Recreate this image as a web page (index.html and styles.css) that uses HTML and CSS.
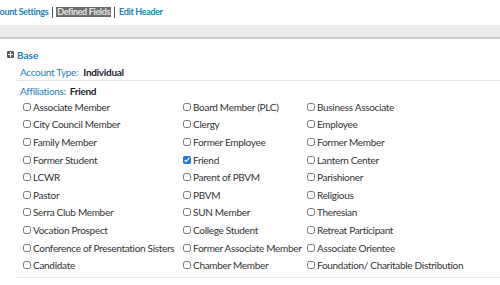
FILE: index.html
```html
<!DOCTYPE html>
<html>
<head>
<meta charset="utf-8">
<link rel="stylesheet" href="styles.css">
</head>
<body>
<nav class="tabs">
  <a class="tab">Account Settings</a>
  <span class="sep"></span>
  <a class="tab active">Defined Fields</a>
  <span class="sep"></span>
  <a class="tab">Edit Header</a>
</nav>
<div class="bar"></div>
<section class="panel">
  <div class="section-title"><span class="plus"></span>Base</div>
  <div class="field"><span class="label">Account Type:</span><span class="value">Individual</span></div>
  <div class="field divided"><span class="label">Affiliations:</span><span class="value">Friend</span></div>
  <div class="grid">
    <label class="opt"><input type="checkbox">Associate Member</label>
    <label class="opt"><input type="checkbox">Board Member (PLC)</label>
    <label class="opt"><input type="checkbox">Business Associate</label>
    <label class="opt"><input type="checkbox">City Council Member</label>
    <label class="opt"><input type="checkbox">Clergy</label>
    <label class="opt"><input type="checkbox">Employee</label>
    <label class="opt"><input type="checkbox">Family Member</label>
    <label class="opt"><input type="checkbox">Former Employee</label>
    <label class="opt"><input type="checkbox">Former Member</label>
    <label class="opt"><input type="checkbox">Former Student</label>
    <label class="opt"><input type="checkbox" checked>Friend</label>
    <label class="opt"><input type="checkbox">Lantern Center</label>
    <label class="opt"><input type="checkbox">LCWR</label>
    <label class="opt"><input type="checkbox">Parent of PBVM</label>
    <label class="opt"><input type="checkbox">Parishioner</label>
    <label class="opt"><input type="checkbox">Pastor</label>
    <label class="opt"><input type="checkbox">PBVM</label>
    <label class="opt"><input type="checkbox">Religious</label>
    <label class="opt"><input type="checkbox">Serra Club Member</label>
    <label class="opt"><input type="checkbox">SUN Member</label>
    <label class="opt"><input type="checkbox">Theresian</label>
    <label class="opt"><input type="checkbox">Vocation Prospect</label>
    <label class="opt"><input type="checkbox">College Student</label>
    <label class="opt"><input type="checkbox">Retreat Participant</label>
    <label class="opt"><input type="checkbox">Conference of Presentation Sisters</label>
    <label class="opt"><input type="checkbox">Former Associate Member</label>
    <label class="opt"><input type="checkbox">Associate Orientee</label>
    <label class="opt"><input type="checkbox">Candidate</label>
    <label class="opt"><input type="checkbox">Chamber Member</label>
    <label class="opt"><input type="checkbox">Foundation/ Charitable Distribution</label>
  </div>
</section>
</body>
</html>
```
FILE: styles.css
```css
* { box-sizing: border-box; }
html, body { margin: 0; padding: 0; background: #fff; overflow: hidden; }
body {
  width: 500px;
  height: 285px;
  font-family: "Lato", "Open Sans", sans-serif;
  font-size: 10px;
  color: #333;
}
.tabs {
  display: flex;
  align-items: center;
  gap: 3px;
  height: 23px;
  margin-left: -15px;
  padding-top: 1px;
  font-size: 9px;
  letter-spacing: -0.35px;
}
.tab {
  font-weight: bold;
  color: #2181b8;
  padding: 0 1px;
  line-height: 10px;
}
.tab.active {
  background: #6e6e6e;
  color: #e6e6e6;
}
.sep {
  width: 1px;
  height: 11px;
  background: #555;
}
.bar {
  margin-top: 2px;
  height: 14px;
  background: #ececec;
  border-bottom: 2px solid #cbcdd2;
}
.panel {
  padding: 10px 0 0 7px;
  letter-spacing: -0.3px;
}
.section-title {
  display: flex;
  align-items: center;
  gap: 3px;
  font-weight: bold;
  color: #2181b8;
  height: 11px;
  letter-spacing: 0;
}
.plus {
  width: 7px;
  height: 7px;
  background: #5c5c5c;
  border-radius: 1px;
  position: relative;
}
.plus::before, .plus::after {
  content: "";
  position: absolute;
  background: #fff;
}
.plus::before { left: 1px; top: 3px; width: 5px; height: 1px; }
.plus::after { left: 3px; top: 1px; width: 1px; height: 5px; }
.field {
  display: flex;
  gap: 5px;
  margin-left: 13px;
  height: 17px;
  align-items: center;
  margin-top: 3px;
}
.field.divided {
  margin-top: 0;
  margin-left: 10px;
  padding-left: 3px;
  border-top: 1px solid #e6e6e6;
  height: 18px;
  padding-top: 3px;
  gap: 4px;
}
.label { color: #2181b8; }
.value { font-weight: bold; color: #1c1c2c; }
.grid {
  display: grid;
  grid-template-columns: 160px 124px 1fr;
  grid-auto-rows: 17.6px;
  margin-left: 10px;
  padding-left: 6px;
  border-bottom: 1px solid #e6e6e6;
  padding-bottom: 3px;
}
.opt {
  display: flex;
  align-items: center;
  gap: 2px;
  color: #333;
  white-space: nowrap;
}
.opt input {
  width: 8px;
  height: 8px;
  margin: 0;
  accent-color: #1a73e8;
}
```
